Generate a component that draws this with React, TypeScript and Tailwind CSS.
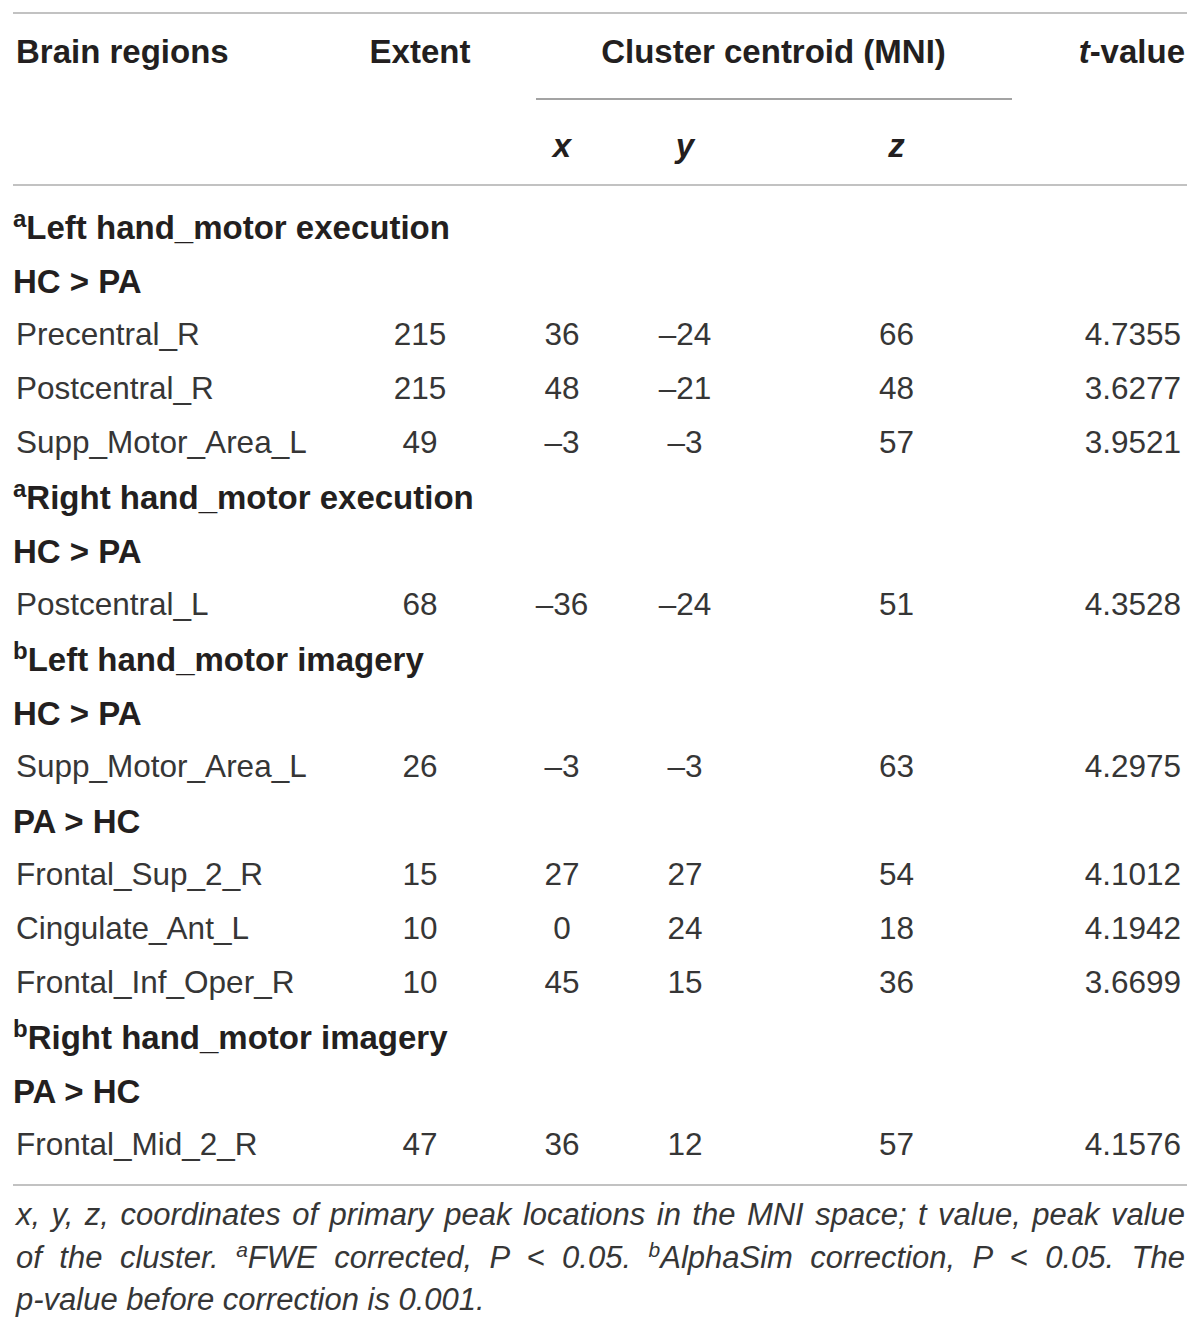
import React from 'react';

type Row =
  | { kind: 'group'; sup: string; label: string }
  | { kind: 'sub'; label: string }
  | { kind: 'data'; region: string; extent: string; x: string; y: string; z: string; t: string };

const rows: Row[] = [
  { kind: 'group', sup: 'a', label: 'Left hand_motor execution' },
  { kind: 'sub', label: 'HC > PA' },
  { kind: 'data', region: 'Precentral_R', extent: '215', x: '36', y: '–24', z: '66', t: '4.7355' },
  { kind: 'data', region: 'Postcentral_R', extent: '215', x: '48', y: '–21', z: '48', t: '3.6277' },
  { kind: 'data', region: 'Supp_Motor_Area_L', extent: '49', x: '–3', y: '–3', z: '57', t: '3.9521' },
  { kind: 'group', sup: 'a', label: 'Right hand_motor execution' },
  { kind: 'sub', label: 'HC > PA' },
  { kind: 'data', region: 'Postcentral_L', extent: '68', x: '–36', y: '–24', z: '51', t: '4.3528' },
  { kind: 'group', sup: 'b', label: 'Left hand_motor imagery' },
  { kind: 'sub', label: 'HC > PA' },
  { kind: 'data', region: 'Supp_Motor_Area_L', extent: '26', x: '–3', y: '–3', z: '63', t: '4.2975' },
  { kind: 'sub', label: 'PA > HC' },
  { kind: 'data', region: 'Frontal_Sup_2_R', extent: '15', x: '27', y: '27', z: '54', t: '4.1012' },
  { kind: 'data', region: 'Cingulate_Ant_L', extent: '10', x: '0', y: '24', z: '18', t: '4.1942' },
  { kind: 'data', region: 'Frontal_Inf_Oper_R', extent: '10', x: '45', y: '15', z: '36', t: '3.6699' },
  { kind: 'group', sup: 'b', label: 'Right hand_motor imagery' },
  { kind: 'sub', label: 'PA > HC' },
  { kind: 'data', region: 'Frontal_Mid_2_R', extent: '47', x: '36', y: '12', z: '57', t: '4.1576' },
];

const cols = 'grid grid-cols-[340px_134px_150px_96px_327px_127px]';

const TableRow = ({ row }: { row: Row }) => {
  if (row.kind === 'group') {
    return (
      <div className="flex h-[54px] items-center text-[33px] font-bold leading-none text-[#231f20]">
        <span>
          <sup className="text-[24px] top-[-0.5em]">{row.sup}</sup>
          {row.label}
        </span>
      </div>
    );
  }
  if (row.kind === 'sub') {
    return (
      <div className="flex h-[54px] items-center text-[33px] font-bold leading-none text-[#231f20]">
        {row.label}
      </div>
    );
  }
  return (
    <div className={`${cols} h-[54px] items-center text-[31.5px] leading-none text-[#363636]`}>
      <div className="pl-[3px]">{row.region}</div>
      <div className="text-center">{row.extent}</div>
      <div className="text-center">{row.x}</div>
      <div className="text-center">{row.y}</div>
      <div className="text-center">{row.z}</div>
      <div className="pr-[6px] text-right">{row.t}</div>
    </div>
  );
};

export default function App() {
  return (
    <div className="h-[1331px] w-[1200px] bg-white pt-[12px] font-['Liberation_Sans',Arial,sans-serif]">
      <div className="ml-[13px] w-[1174px]">
        {/* header */}
        <div className="border-y-2 border-[#c2c2c2] text-[33px] font-bold leading-[40px] text-[#231f20]">
          <div className={`${cols} h-[84px] pt-[18px]`}>
            <div className="pl-[3px]">Brain regions</div>
            <div className="text-center">Extent</div>
            <div className="col-span-3 text-center">Cluster centroid (MNI)</div>
            <div className="pr-[2px] text-right">
              <span className="italic">t</span>-value
            </div>
          </div>
          <div className="flex h-[2px]">
            <div className="w-[523px]" />
            <div className="w-[476px] bg-[#a3a3a3]" />
          </div>
          <div className={`${cols} h-[84px] pt-[26px] italic`}>
            <div />
            <div />
            <div className="text-center">x</div>
            <div className="text-center">y</div>
            <div className="text-center">z</div>
            <div />
          </div>
        </div>

        {/* body */}
        <div className="border-b-2 border-[#c2c2c2] pt-[14px] pb-[12px]">
          {rows.map((row, i) => (
            <TableRow key={i} row={row} />
          ))}
        </div>

        {/* footnote */}
        <div className="pt-[8px] pl-[3px] pr-[2px] text-[31px] italic leading-[42.5px] text-[#363636]">
          <div className="whitespace-nowrap text-justify [text-align-last:justify]">
            x, y, z, coordinates of primary peak locations in the MNI space; t value, peak value
          </div>
          <div className="whitespace-nowrap text-justify [text-align-last:justify]">
            of the cluster. <sup className="text-[21px]">a</sup>FWE corrected, P &lt; 0.05.{' '}
            <sup className="text-[21px]">b</sup>AlphaSim correction, P &lt; 0.05. The
          </div>
          <div className="whitespace-nowrap">p-value before correction is 0.001.</div>
        </div>
      </div>
    </div>
  );
}
